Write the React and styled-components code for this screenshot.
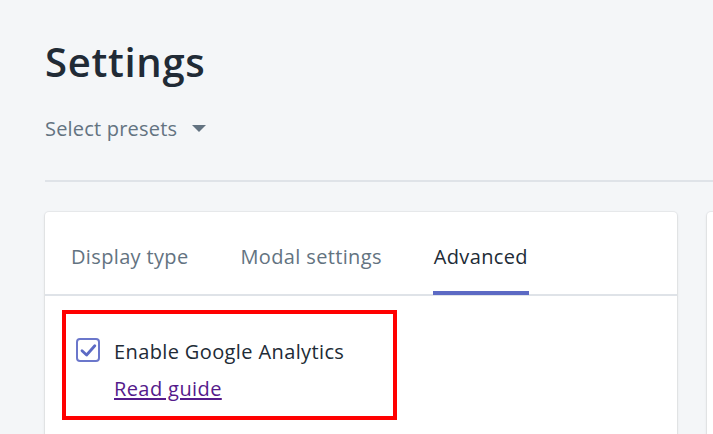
import React from "react";
import styled, { createGlobalStyle } from "styled-components";

const GlobalStyle = createGlobalStyle`
  html, body {
    margin: 0;
    padding: 0;
    background: #f4f6f8;
    overflow: hidden;
  }
  body {
    font-family: "Open Sans", "Noto Sans", Arial, sans-serif;
    color: #212b36;
    -webkit-font-smoothing: antialiased;
  }
  * { box-sizing: border-box; }
`;

const Page = styled.div`
  height: 434px;
  overflow: hidden;
  padding: 38px 0 0 45px;
`;

const Title = styled.h1`
  margin: 0;
  font-size: 40px;
  line-height: 48px;
  font-weight: 600;
  color: #212b36;
  letter-spacing: 0.7px;
`;

const PresetSelect = styled.button`
  display: flex;
  align-items: center;
  gap: 15px;
  margin-top: 29px;
  padding: 0;
  border: none;
  background: none;
  font-family: inherit;
  font-size: 20px;
  line-height: 28px;
  letter-spacing: 0.2px;
  color: #637381;
  cursor: pointer;
`;

const Caret = styled.span`
  width: 0;
  height: 0;
  border-left: 7.5px solid transparent;
  border-right: 7.5px solid transparent;
  border-top: 7px solid #637381;
  margin-top: -2px;
`;

const Divider = styled.hr`
  margin: 37px 0 0;
  border: none;
  border-top: 2px solid #dfe3e8;
`;

const Columns = styled.div`
  display: flex;
  gap: 30px;
  margin-top: 30px;
  align-items: flex-start;
`;

const Card = styled.section`
  flex: 0 0 ${(p) => p.$width}px;
  background: #ffffff;
  border-radius: 4px;
  box-shadow: 0 0 0 1px rgba(63, 63, 68, 0.05), 0 1px 3px 0 rgba(63, 63, 68, 0.15);
  min-height: 300px;
`;

const TabList = styled.div`
  display: flex;
  height: 84px;
  border-bottom: 2px solid #dfe3e8;
`;

const Tab = styled.button`
  display: flex;
  padding: 0 26px;
  border: none;
  background: none;
  font-family: inherit;
  cursor: pointer;
`;

const TabTitle = styled.span`
  display: block;
  padding: 31px 1px 19px;
  margin: 0 -1px -1px;
  font-size: 20px;
  line-height: 28px;
  letter-spacing: 0.35px;
  white-space: nowrap;
  color: ${(p) => (p.$active ? "#212b36" : "#637381")};
  border-bottom: 4px solid ${(p) => (p.$active ? "#5c6ac4" : "transparent")};
  position: relative;
`;

const CardBody = styled.div`
  padding: 14px 17px 20px;
`;

const Highlight = styled.div`
  width: 335px;
  border: 4px solid #ff0000;
  padding: 24px 10px 13px;
`;

const CheckRow = styled.label`
  display: flex;
  align-items: flex-start;
  gap: 14px;
  font-size: 20px;
  line-height: 28px;
  letter-spacing: 0.38px;
  color: #212b36;
  cursor: pointer;
`;

const CheckBox = styled.span`
  flex: 0 0 24px;
  width: 24px;
  height: 24px;
  border: 2px solid #6b77cb;
  border-radius: 4px;
  background: #fff;
  display: flex;
  align-items: center;
  justify-content: center;
`;

const GuideLink = styled.a`
  display: inline-block;
  margin: 9px 0 0 38px;
  font-size: 20px;
  line-height: 28px;
  letter-spacing: 0.4px;
  color: #551a8b;
  text-decoration: underline;
  text-underline-offset: 2px;
`;

export default function App() {
  const tabs = ["Display type", "Modal settings", "Advanced"];
  return (
    <>
      <GlobalStyle />
      <Page>
        <Title>Settings</Title>
        <PresetSelect>
          Select presets
          <Caret />
        </PresetSelect>
        <Divider />
        <Columns>
          <Card $width={632}>
            <TabList>
              {tabs.map((t) => (
                <Tab key={t}>
                  <TabTitle $active={t === "Advanced"}>{t}</TabTitle>
                </Tab>
              ))}
            </TabList>
            <CardBody>
              <Highlight>
                <CheckRow>
                  <CheckBox>
                    <svg width="20" height="20" viewBox="0 0 20 20" fill="none">
                      <path
                        d="M4 10.7 L8.6 15 L16.8 5.8"
                        stroke="#5c6ac4"
                        strokeWidth="2.8"
                        strokeLinecap="round"
                        strokeLinejoin="round"
                      />
                    </svg>
                  </CheckBox>
                  Enable Google Analytics
                </CheckRow>
                <GuideLink href="#">Read guide</GuideLink>
              </Highlight>
            </CardBody>
          </Card>
          <Card $width={400} />
        </Columns>
      </Page>
    </>
  );
}
